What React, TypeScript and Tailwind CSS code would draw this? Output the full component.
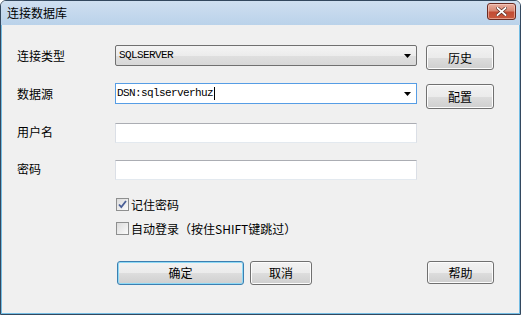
import React from "react";

const cjk = { fontFamily: '"Noto Sans CJK SC", "Noto Sans", sans-serif' };
const mono = { fontFamily: '"Liberation Mono", "Noto Sans CJK SC", monospace' };

function Arrow() {
  return (
    <svg width="7" height="4" viewBox="0 0 7 4" className="shrink-0">
      <path d="M0 0h7L3.5 4z" fill="#000" />
    </svg>
  );
}

function Btn({
  label,
  w,
  h,
  focused,
}: {
  label: string;
  w: string;
  h: string;
  focused?: boolean;
}) {
  return (
    <button
      className={`${w} ${h} flex items-center justify-center rounded-[3px] border text-[12px] text-black ${
        focused
          ? "border-[#3c7fb1] shadow-[inset_0_0_0_1px_#8ed9f5]"
          : "border-[#707070] shadow-[inset_0_0_0_1px_#fcfcfc]"
      } bg-[linear-gradient(#f2f2f2_0%,#ebebeb_50%,#dddddd_51%,#cfcfcf_100%)]`}
      style={cjk}
    >
      {label}
    </button>
  );
}

function Check({ checked, label }: { checked?: boolean; label: string }) {
  return (
    <div className="flex h-[13px] items-center pl-[99px]">
      <div className="flex h-[13px] w-[13px] shrink-0 items-center justify-center border border-[#8e8f8f] bg-[linear-gradient(135deg,#dcdcdc,#fbfbfb)]">
        {checked && (
          <svg width="9" height="9" viewBox="0 0 9 9">
            <path d="M1 4.5l2.3 2.6L8 1" fill="none" stroke="#4a5f97" strokeWidth="1.8" />
          </svg>
        )}
      </div>
      <span className="ml-[2px] text-[12px] leading-none text-black" style={cjk}>
        {label}
      </span>
    </div>
  );
}

export default function App() {
  return (
    <div className="h-[315px] w-[521px] overflow-hidden bg-white">
      <div className="flex h-full w-full flex-col rounded-t-[6px] border border-[#33485e] bg-[#f0f0f0]">
        {/* title bar */}
        <div className="flex h-[24px] shrink-0 items-center justify-between rounded-t-[5px] bg-[linear-gradient(#cfdff0,#bad2ea)] pl-[6px] pr-[4px]">
          <span className="text-[12px] text-black" style={cjk}>
            连接数据库
          </span>
          <div className="mb-[3px] flex h-[17px] w-[29px] items-center justify-center rounded-[3px] border border-[#6b2b22] bg-[linear-gradient(#eab0a2_0%,#d88873_45%,#c24b33_55%,#c9593d_100%)] shadow-[inset_0_0_0_1px_rgba(255,220,210,0.5)]">
            <svg width="11" height="9" viewBox="0 0 11 9">
              <path d="M1.5 1l8 7M9.5 1l-8 7" stroke="#5a2a22" strokeWidth="3.2" strokeLinecap="square" />
              <path d="M1.5 1l8 7M9.5 1l-8 7" stroke="#fff" strokeWidth="1.8" strokeLinecap="square" />
            </svg>
          </div>
        </div>

        {/* body */}
        <div className="flex flex-1 flex-col border-x border-b border-[#74bde4] pl-[15px] pt-[20px]">
          <div className="flex h-[25px] items-start">
            <span className="w-[98px] text-[12px] leading-[21px] text-black" style={cjk}>
              连接类型
            </span>
            <div className="flex h-[21px] w-[302px] items-center justify-between rounded-[2px] border border-[#707070] bg-[linear-gradient(#f4f4f4_0%,#ececec_50%,#dfdfdf_51%,#d8d8d8_100%)] pl-[3px] pr-[5px]">
              <span className="text-[11px] tracking-[-0.6px] text-black" style={mono}>
                SQLSERVER
              </span>
              <Arrow />
            </div>
            <div className="ml-[9px]">
              <Btn label="历史" w="w-[68px]" h="h-[25px]" />
            </div>
          </div>

          <div className="mt-[13px] flex h-[26px] items-start">
            <span className="w-[98px] text-[12px] leading-[21px] text-black" style={cjk}>
              数据源
            </span>
            <div className="flex h-[21px] w-[302px] items-center justify-between border border-[#569de5] bg-white pl-[1px] pr-[5px]">
              <span className="flex items-center text-[11px] tracking-[-0.6px] text-black" style={mono}>
                DSN:sqlserverhuz
                <span className="ml-[1px] inline-block h-[13px] w-px bg-black" />
              </span>
              <Arrow />
            </div>
            <div className="ml-[9px] mt-[1px]">
              <Btn label="配置" w="w-[68px]" h="h-[25px]" />
            </div>
          </div>

          <div className="mt-[14px] flex h-[20px] items-start">
            <span className="w-[98px] text-[12px] leading-[18px] text-black" style={cjk}>
              用户名
            </span>
            <div className="h-[20px] w-[302px] border border-[#dbdfe6] border-t-[#abadb3] border-b-[#e3e9ef] bg-white" />
          </div>

          <div className="mt-[17px] flex h-[20px] items-start">
            <span className="w-[98px] text-[12px] leading-[18px] text-black" style={cjk}>
              密码
            </span>
            <div className="h-[20px] w-[302px] border border-[#dbdfe6] border-t-[#abadb3] border-b-[#e3e9ef] bg-white" />
          </div>

          <div className="mt-[18px]">
            <Check checked label="记住密码" />
          </div>
          <div className="mt-[11px]">
            <Check label="自动登录（按住SHIFT键跳过）" />
          </div>

          <div className="mt-[26px] flex items-start pl-[100px]">
            <Btn label="确定" w="w-[127px]" h="h-[24px]" focused />
            <div className="ml-[6px]">
              <Btn label="取消" w="w-[62px]" h="h-[24px]" />
            </div>
            <div className="ml-[115px]">
              <Btn label="帮助" w="w-[67px]" h="h-[23px]" />
            </div>
          </div>
        </div>
      </div>
    </div>
  );
}
